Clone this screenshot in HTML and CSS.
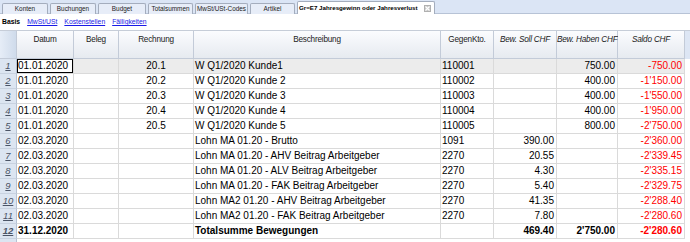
FILE: index.html
```html
<!DOCTYPE html>
<html lang="de">
<head>
<meta charset="utf-8">
<title>Journal</title>
<link rel="stylesheet" href="styles.css">
</head>
<body>
<div class="tabbar">
  <div class="tab w46">Konten</div>
  <div class="tab w46">Buchungen</div>
  <div class="tab w48">Budget</div>
  <div class="tab w45">Totalsummen</div>
  <div class="tab w53">MwSt/USt-Codes</div>
  <div class="tab w45">Artikel</div>
  <div class="tab active"><span class="title">Gr=E7 Jahresgewinn oder Jahresverlust</span><span class="close"><svg width="5" height="5" viewBox="0 0 5 5"><path d="M0.5 0.5L4.5 4.5M4.5 0.5L0.5 4.5" stroke="#fff" stroke-width="1.1"/></svg></span></div>
</div>
<div class="subtabs">
  <span class="sub-active">Basis</span>
  <a class="sub" href="#">MwSt/USt</a>
  <a class="sub" href="#">Kostenstellen</a>
  <a class="sub" href="#">Fälligkeiten</a>
</div>
<div class="grid">
  <div class="row head">
    <div class="c num corner"></div>
    <div class="c">Datum</div>
    <div class="c">Beleg</div>
    <div class="c">Rechnung</div>
    <div class="c">Beschreibung</div>
    <div class="c">GegenKto.</div>
    <div class="c it">Bew. Soll CHF</div>
    <div class="c it">Bew. Haben CHF</div>
    <div class="c it">Saldo CHF</div>
    <div class="c strip"></div>
  </div>
  <div class="row sel">
    <div class="c num"><span>1</span></div>
    <div class="c l cur">01.01.2020</div>
    <div class="c"></div>
    <div class="c m">20.1</div>
    <div class="c l">W Q1/2020 Kunde1</div>
    <div class="c l">110001</div>
    <div class="c r"></div>
    <div class="c r">750.00</div>
    <div class="c r neg">-750.00</div>
    <div class="c strip"></div>
  </div>
  <div class="row">
    <div class="c num"><span>2</span></div>
    <div class="c l">01.01.2020</div>
    <div class="c"></div>
    <div class="c m">20.2</div>
    <div class="c l">W Q1/2020 Kunde 2</div>
    <div class="c l">110002</div>
    <div class="c r"></div>
    <div class="c r">400.00</div>
    <div class="c r neg">-1'150.00</div>
    <div class="c strip"></div>
  </div>
  <div class="row">
    <div class="c num"><span>3</span></div>
    <div class="c l">01.01.2020</div>
    <div class="c"></div>
    <div class="c m">20.3</div>
    <div class="c l">W Q1/2020 Kunde 3</div>
    <div class="c l">110003</div>
    <div class="c r"></div>
    <div class="c r">400.00</div>
    <div class="c r neg">-1'550.00</div>
    <div class="c strip"></div>
  </div>
  <div class="row">
    <div class="c num"><span>4</span></div>
    <div class="c l">01.01.2020</div>
    <div class="c"></div>
    <div class="c m">20.4</div>
    <div class="c l">W Q1/2020 Kunde 4</div>
    <div class="c l">110004</div>
    <div class="c r"></div>
    <div class="c r">400.00</div>
    <div class="c r neg">-1'950.00</div>
    <div class="c strip"></div>
  </div>
  <div class="row">
    <div class="c num"><span>5</span></div>
    <div class="c l">01.01.2020</div>
    <div class="c"></div>
    <div class="c m">20.5</div>
    <div class="c l">W Q1/2020 Kunde 5</div>
    <div class="c l">110005</div>
    <div class="c r"></div>
    <div class="c r">800.00</div>
    <div class="c r neg">-2'750.00</div>
    <div class="c strip"></div>
  </div>
  <div class="row">
    <div class="c num"><span>6</span></div>
    <div class="c l">02.03.2020</div>
    <div class="c"></div>
    <div class="c m"></div>
    <div class="c l">Lohn MA 01.20 - Brutto</div>
    <div class="c l">1091</div>
    <div class="c r">390.00</div>
    <div class="c r"></div>
    <div class="c r neg">-2'360.00</div>
    <div class="c strip"></div>
  </div>
  <div class="row">
    <div class="c num"><span>7</span></div>
    <div class="c l">02.03.2020</div>
    <div class="c"></div>
    <div class="c m"></div>
    <div class="c l">Lohn MA 01.20 - AHV Beitrag Arbeitgeber</div>
    <div class="c l">2270</div>
    <div class="c r">20.55</div>
    <div class="c r"></div>
    <div class="c r neg">-2'339.45</div>
    <div class="c strip"></div>
  </div>
  <div class="row">
    <div class="c num"><span>8</span></div>
    <div class="c l">02.03.2020</div>
    <div class="c"></div>
    <div class="c m"></div>
    <div class="c l">Lohn MA 01.20 - ALV Beitrag Arbeitgeber</div>
    <div class="c l">2270</div>
    <div class="c r">4.30</div>
    <div class="c r"></div>
    <div class="c r neg">-2'335.15</div>
    <div class="c strip"></div>
  </div>
  <div class="row">
    <div class="c num"><span>9</span></div>
    <div class="c l">02.03.2020</div>
    <div class="c"></div>
    <div class="c m"></div>
    <div class="c l">Lohn MA 01.20 - FAK Beitrag Arbeitgeber</div>
    <div class="c l">2270</div>
    <div class="c r">5.40</div>
    <div class="c r"></div>
    <div class="c r neg">-2'329.75</div>
    <div class="c strip"></div>
  </div>
  <div class="row">
    <div class="c num"><span>10</span></div>
    <div class="c l">02.03.2020</div>
    <div class="c"></div>
    <div class="c m"></div>
    <div class="c l">Lohn MA2 01.20 - AHV Beitrag Arbeitgeber</div>
    <div class="c l">2270</div>
    <div class="c r">41.35</div>
    <div class="c r"></div>
    <div class="c r neg">-2'288.40</div>
    <div class="c strip"></div>
  </div>
  <div class="row">
    <div class="c num"><span>11</span></div>
    <div class="c l">02.03.2020</div>
    <div class="c"></div>
    <div class="c m"></div>
    <div class="c l">Lohn MA2 01.20 - FAK Beitrag Arbeitgeber</div>
    <div class="c l">2270</div>
    <div class="c r">7.80</div>
    <div class="c r"></div>
    <div class="c r neg">-2'280.60</div>
    <div class="c strip"></div>
  </div>
  <div class="row total">
    <div class="c num"><span>12</span></div>
    <div class="c l">31.12.2020</div>
    <div class="c"></div>
    <div class="c m"></div>
    <div class="c l">Totalsumme Bewegungen</div>
    <div class="c l"></div>
    <div class="c r">469.40</div>
    <div class="c r">2'750.00</div>
    <div class="c r neg">-2'280.60</div>
    <div class="c strip"></div>
  </div>
  <div class="row tail">
    <div class="c num"></div>
  </div>
</div>
</body>
</html>
```

FILE: styles.css
```css
* { box-sizing: border-box; }
html, body { margin: 0; padding: 0; background: #fff; }
body { font-family: "Liberation Sans", Arial, sans-serif; color: #000; width: 690px; overflow: hidden; }

.tabbar {
  height: 14px;
  background: #dbe5f5;
  display: flex;
  align-items: flex-end;
  gap: 2px;
  padding-left: 2px;
  border-bottom: 1px solid #b7c3d6;
}
.tab {
  height: 11px;
  margin-bottom: -1px;
  background: #e7edf8;
  border: 1px solid #a4adbd;
  border-bottom: none;
  border-radius: 2px 2px 0 0;
  font-size: 6.4px;
  line-height: 10px;
  text-align: center;
  color: #222;
  white-space: nowrap;
  overflow: hidden;
}
.w46 { width: 46px; }
.w48 { width: 48px; }
.w45 { width: 45px; }
.w53 { width: 53px; }
.tab.active {
  width: 138px;
  height: 13px;
  background: #fff;
  font-weight: bold;
  color: #000;
  line-height: 12px;
  padding: 0 3px 0 1px;
  display: flex;
  align-items: center;
  justify-content: space-between;
  font-size: 6.2px;
}
.close {
  width: 7px;
  height: 7px;
  background: #c6c6c6;
  border: 1px solid #b0b0b0;
  display: flex;
  align-items: center;
  justify-content: center;
}
.close svg { display: block; }

.subtabs {
  height: 17px;
  display: flex;
  align-items: flex-end;
  gap: 7px;
  padding: 0 0 4px 2px;
  font-size: 6.8px;
  line-height: 8px;
  border-bottom: 1px solid #c6cdd8;
}
.sub-active { font-weight: bold; }
.sub { color: #1a1ae6; text-decoration: underline; }

.row {
  display: grid;
  grid-template-columns: 17px 57px 45px 75px 247px 53px 63px 61px 67px 5px;
  height: 15px;
  font-size: 10px;
  line-height: 14px;
}
.c {
  border-right: 1px solid #dadada;
  border-bottom: 1px solid #dadada;
  white-space: nowrap;
  overflow: hidden;
  padding: 0 2px;
}
.l { text-align: left; padding-left: 1px; }
.r { text-align: right; padding-right: 2px; }
.m { text-align: center; }
.neg { color: #f00; }

.num {
  background: #dce5f1;
  border-right: 1px solid #b6c2d3;
  border-bottom: 1px solid #c8d2e0;
  color: #4b5466;
  font-style: italic;
  text-align: center;
  padding: 0;
  font-size: 9.5px;
}
.num span { text-decoration: underline; }
.strip { border-right: none; border-bottom: none; background: #fff; padding: 0; }

.head {
  height: 28px;
  font-size: 8.2px;
  line-height: 11px;
  letter-spacing: -0.2px;
  color: #222;
}
.head .c {
  background: linear-gradient(#fbfcfe, #e6eaf0);
  border-right: 1px solid #c3cbd8;
  border-bottom: 1px solid #c3cbd8;
  text-align: center;
  padding: 3px 0 0 0;
  overflow: visible;
}
.head .it { font-style: italic; }
.head .corner { background: linear-gradient(90deg, #e6edf7, #cfdbeb); }
.head .strip { background: #dde6f4; border: none; }

.sel .c { background: #ececec; }
.sel .num { background: #dce5f1; }
.sel .strip { background: #fff; }
.sel .cur { background: #fff; box-shadow: inset 0 0 0 1px #000; padding-left: 1px; }

.total { font-weight: bold; }
.tail { height: 3px; }
.tail .num { border-bottom: none; }
```
